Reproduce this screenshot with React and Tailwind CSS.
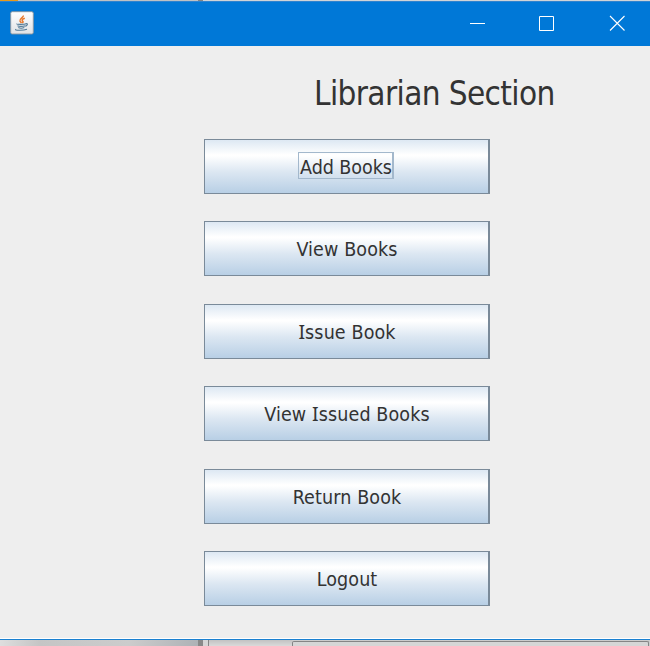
import React from "react";

const labelFont = "font-['DejaVu_Sans_Condensed','DejaVu_Sans',sans-serif] [font-stretch:condensed]";

function JavaIcon() {
  return (
    <svg className="block h-6 w-6" viewBox="0 0 24 24" fill="none">
      <defs>
        <linearGradient id="tile" x1="0" y1="0" x2="0" y2="1">
          <stop offset="0" stopColor="#ffffff" />
          <stop offset="1" stopColor="#dfe2e5" />
        </linearGradient>
      </defs>
      <rect x="0.7" y="0.7" width="22.6" height="22.3" rx="1.5" fill="url(#tile)" stroke="#8b969f" strokeWidth="0.9" />
      <path d="M13.300 4.500c.6 2-4.200 2.900-3.300 5.600L11.500 12M14.800 7.300c-2.900 1-3.200 2-2 3 .7.700 0 1.200-.6 1.700" stroke="#e8792d" strokeWidth="1.500" />
      <path d="M7 12.800c-1 .8 7.200.8 9.300 0M15.500 12.700c3-.6 2.200 2.300-.8 2.600M7.500 14.800c1.500.8 5.500.8 7.300 0M8.300 16.600c1.500.7 4 .7 6 0M6 18.200c-2.600 1.200 7 1.500 11 .1" stroke="#527b98" strokeWidth="1.100" />
    </svg>
  );
}

function TitleBar() {
  return (
    <header className="flex h-[45px] items-start border-t border-[#2f83cf] bg-[#0078d7]">
      <div className="pt-[9px] pl-[10px]">
        <JavaIcon />
      </div>
      <div className="ml-auto flex pt-[13px] pr-[25px]">
        <svg className="block h-4 w-4" viewBox="0 0 16 16">
          <path d="M0 8.500H15" stroke="#fff" />
        </svg>
        <svg className="ml-[52px] block h-4 w-4" viewBox="0 0 16 16">
          <path d="M1.500 1.500H15.500V15.500H1.500Z" fill="none" stroke="#fff" />
        </svg>
        <svg className="ml-[55px] block h-4 w-4" viewBox="0 0 16 16">
          <path d="M1 1L15.500 15.500M15.500 1L1 15.500" stroke="#fff" strokeWidth="1.100" />
        </svg>
      </div>
    </header>
  );
}

function MenuButton({ children, focused = false }) {
  return (
    <button
      className={`flex h-[55px] w-[286px] justify-center border border-r-2 border-[#7a8a99] bg-[linear-gradient(to_bottom,#dde8f3_0%,#ffffff_28%,#ffffff_30%,#dce7f2_60%,#b8cfe5_100%)] pt-3 text-[19.500px] leading-6 tracking-[0.120px] whitespace-pre text-[#333333] ${labelFont}`}
    >
      <span className={focused ? "-ml-px block h-[27px] w-24 border border-r-2 border-[#a3b8cc] pt-[3px] pl-px" : "block pt-1 pl-px"}>
        {children}
      </span>
    </button>
  );
}

function SerifI() {
  return <span className="font-['Noto_Sans',sans-serif] leading-none">I</span>;
}

export default function App() {
  return (
    <div className="flex h-[646px] w-[650px] flex-col overflow-hidden bg-[#eeeeee]">
      <div className="flex h-px bg-[#d0d3d6]">
        <div className="w-[18px] bg-[#e69a1b]" />
        <div className="w-[180px] bg-[#bfc1c3]" />
        <div className="w-[5px] bg-[#858585]" />
      </div>
      <TitleBar />
      <main className="flex h-[592px] flex-col">
        <h1 className={`mt-7 ml-[314px] h-10 text-[33px] leading-10 tracking-[-0.620px] whitespace-nowrap text-[#333333] ${labelFont}`}>
          Librarian Section
        </h1>
        <div className="mt-[25px] ml-[204px] flex flex-col">
          <MenuButton focused><span className="tracking-[-0.050px]">Add Books</span></MenuButton>
          <div className="mt-[27px]"><MenuButton>View Books</MenuButton></div>
          <div className="mt-7"><MenuButton><SerifI />ssue Book</MenuButton></div>
          <div className="mt-[27px]"><MenuButton>View <SerifI />ssued Books</MenuButton></div>
          <div className="mt-7"><MenuButton>Return Book</MenuButton></div>
          <div className="mt-[27px]"><MenuButton>Logout</MenuButton></div>
        </div>
      </main>
      <div className="h-px bg-white" />
      <div className="h-px bg-[#1a80d0]" />
      <footer className="flex h-1.5 bg-[#cccccc]">
        <div className="w-[198px] bg-[linear-gradient(to_right,#dedede,#c5c5c5_20%,#cccccc_65%,#aeb2b6)]" />
        <div className="w-[5px] bg-[#898989]" />
        <div className="w-[5px] bg-[#d5d5d5]" />
        <div className="w-px bg-[#858585]" />
        <div className="w-[83px] bg-[linear-gradient(to_bottom,#c2c2c2,#dadada)]" />
        <div className="mt-px h-[5px] w-[357px] rounded-t-[2px] border border-b-0 border-[#858585] bg-[#d6d6d6]" />
      </footer>
    </div>
  );
}
